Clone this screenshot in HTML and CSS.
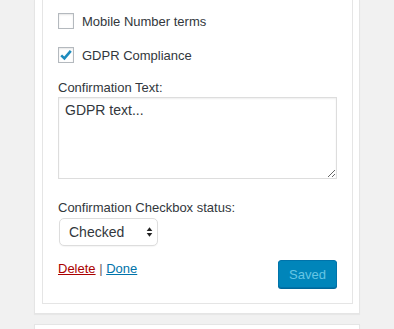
FILE: index.html
```html
<!DOCTYPE html>
<html lang="en">
  <head>
    <meta charset="UTF-8" />
    <meta name="viewport" content="width=device-width, initial-scale=1.0" />
    <title>Widget settings</title>
    <link rel="stylesheet" href="styles.css">
  </head>
  <body>
    <div class="widget">
      <div class="widget-inside">

        <!-- field toggles -->
        <label class="check-row">
          <span class="checkbox"></span>
          <span>Mobile Number terms</span>
        </label>
        <label class="check-row last">
          <span class="checkbox checked">
            <svg width="14" height="14" viewBox="0 0 14 14">
              <path d="M2.2 7.4 L5.4 10.4 L11.8 2.8" fill="none" stroke="#1e8cbe" stroke-width="2.6" stroke-linejoin="miter" />
            </svg>
          </span>
          <span>GDPR Compliance</span>
        </label>

        <div class="field">
          <label class="field-label" for="gdprText">Confirmation Text:</label>
          <textarea id="gdprText">GDPR text...</textarea>
        </div>

        <div class="field">
          <label class="field-label" for="gdprStatus">Confirmation Checkbox status:</label>
          <div class="select-wrap">
            <select id="gdprStatus">
              <option>Checked</option>
              <option>Unchecked</option>
            </select>
            <svg class="select-arrows" width="7" height="10" viewBox="0 0 7 10">
              <path d="M3.5 0.3 L6.3 4 L0.7 4 Z" fill="#222" />
              <path d="M0.7 6 L6.3 6 L3.5 9.7 Z" fill="#222" />
            </svg>
          </div>
        </div>

        <div class="actions">
          <div class="links">
            <a href="#" class="delete-link">Delete</a> | <a href="#" class="done-link">Done</a>
          </div>
          <button class="save-button" disabled>Saved</button>
        </div>

      </div>
    </div>

    <div class="widget next"></div>
  </body>
</html>
```

FILE: styles.css
```css
body {
  margin: 0;
  padding: 0 34px;
  background: #f1f1f1;
  font-family: "Liberation Sans", Arial, sans-serif;
  font-size: 13px;
  color: #32373c;
}

.widget {
  background: #fff;
  border: 1px solid #e5e5e5;
  border-top: none;
  box-shadow: 0 1px 1px rgba(0, 0, 0, 0.04);
  padding: 0 6px 9px 7px;
}

.widget.next {
  border-top: 1px solid #e5e5e5;
  margin-top: 10px;
  height: 4px;
  padding: 0;
}

.widget-inside {
  border: 1px solid #e5e5e5;
  border-top: none;
  padding: 13px 15px 15px;
}

.check-row {
  display: flex;
  align-items: center;
  gap: 8px;
  height: 16px;
  margin-bottom: 18px;
}

.check-row.last {
  margin-bottom: 16px;
}

.checkbox {
  width: 16px;
  height: 16px;
  box-sizing: border-box;
  border: 1px solid #b4b9be;
  background: #fff;
  box-shadow: inset 0 1px 2px rgba(0, 0, 0, 0.1);
  display: flex;
  align-items: center;
  justify-content: center;
}

.field {
  margin-bottom: 20px;
}

.field-label {
  display: block;
  line-height: 18px;
}

textarea {
  display: block;
  width: 100%;
  height: 82px;
  box-sizing: border-box;
  margin: 0;
  padding: 2px 6px;
  border: 1px solid #ddd;
  box-shadow: inset 0 1px 2px rgba(0, 0, 0, 0.07);
  font-family: "Liberation Sans", Arial, sans-serif;
  font-size: 14px;
  line-height: 20px;
  color: #32373c;
  outline: none;
}

.select-wrap {
  position: relative;
  width: 99px;
  margin-top: 1px;
  margin-left: 1px;
}

select {
  appearance: none;
  -webkit-appearance: none;
  display: block;
  width: 99px;
  height: 28px;
  box-sizing: border-box;
  padding: 0 0 0 9px;
  border: 1px solid #ddd;
  border-radius: 5px;
  background: #fff;
  box-shadow: 0 1px 1px rgba(0, 0, 0, 0.04);
  font-family: "Liberation Sans", Arial, sans-serif;
  font-size: 14px;
  color: #32373c;
}

.select-arrows {
  position: absolute;
  right: 5px;
  top: 9px;
}

.actions {
  display: flex;
  justify-content: space-between;
  align-items: flex-start;
  margin-top: -6px;
}

.links {
  line-height: 18px;
  color: #666;
}

.delete-link {
  color: #a00;
}

.done-link {
  color: #0073aa;
}

.save-button {
  width: 59px;
  height: 28px;
  padding: 0;
  border: 1px solid #0073aa;
  border-radius: 3px;
  background: #0085ba;
  color: #66c6e4;
  font-family: "Liberation Sans", Arial, sans-serif;
  font-size: 13px;
  box-shadow: 0 1px 0 #006799;
}
```
